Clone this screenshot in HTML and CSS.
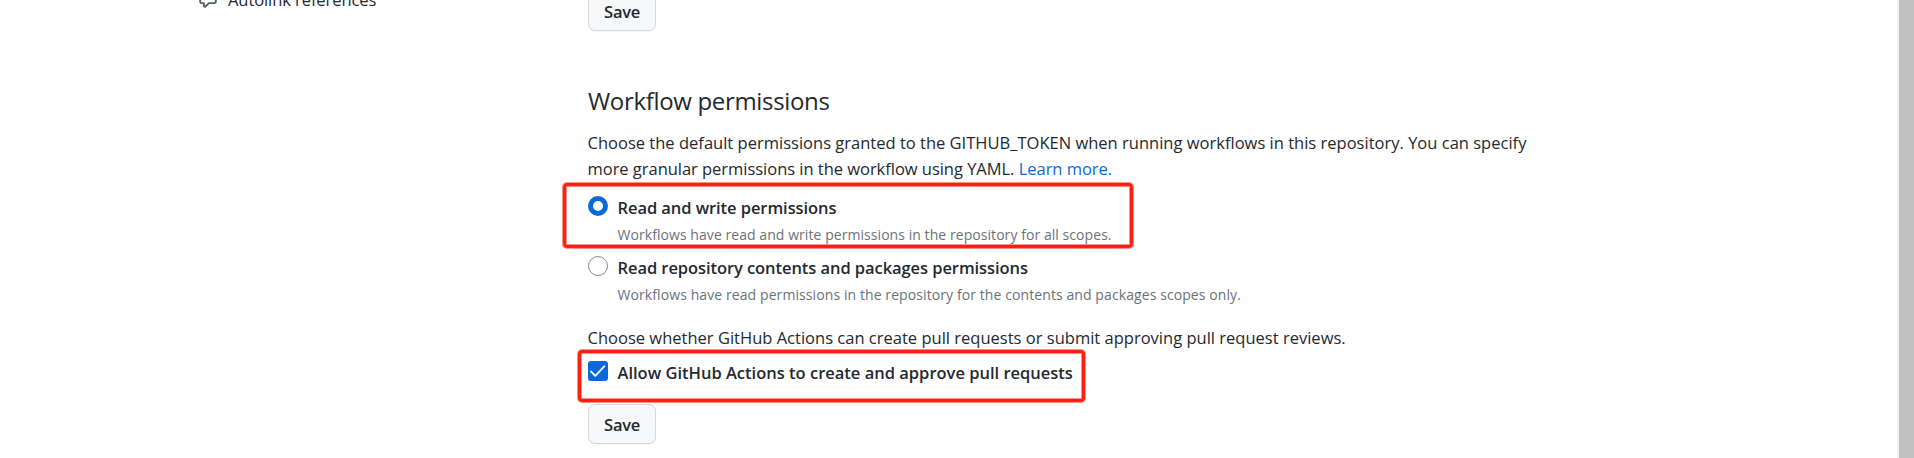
FILE: index.html
```html
<!DOCTYPE html>
<html lang="en">
<head>
<meta charset="utf-8">
<title>Actions settings</title>
<link rel="stylesheet" href="styles.css">
</head>
<body>
<div class="page">
  <nav class="sidebar">
    <a class="nav-item">
      <svg class="nav-icon" viewBox="0 0 16 16"><path fill="currentColor" d="M2.75 2.5a.25.25 0 0 0-.25.25v7.5c0 .138.112.25.25.25h2a.75.75 0 0 1 .75.75v2.19l2.72-2.72a.75.75 0 0 1 .53-.22h4.5a.25.25 0 0 0 .25-.25v-7.5a.25.25 0 0 0-.25-.25H2.75zM1 2.75C1 1.784 1.784 1 2.75 1h10.5c.966 0 1.75.784 1.75 1.75v7.5A1.75 1.75 0 0 1 13.25 12H9.06l-2.573 2.573A1.457 1.457 0 0 1 4 13.543V12H2.75A1.75 1.75 0 0 1 1 10.25v-7.5z"/></svg>
      <span class="nav-label">Autolink references</span>
    </a>
  </nav>
  <main class="content">
    <button class="btn">Save</button>
    <h2 class="heading">Workflow permissions</h2>
    <p class="text intro">Choose the default permissions granted to the GITHUB_TOKEN when running workflows in this repository. You can specify<br><span class="intro-end">more granular permissions in the workflow using YAML. <a class="link">Learn more.</a></span></p>
    <div class="option option-first">
      <span class="radio radio-on"></span>
      <div>
        <div class="label label-tight">Read and write permissions</div>
        <div class="note">Workflows have read and write permissions in the repository for all scopes.</div>
      </div>
      <div class="mark mark-radio"></div>
    </div>
    <div class="option option-second">
      <span class="radio"></span>
      <div>
        <div class="label label-tight">Read repository contents and packages permissions</div>
        <div class="note note-wide">Workflows have read permissions in the repository for the contents and packages scopes only.</div>
      </div>
    </div>
    <p class="text choose">Choose whether GitHub Actions can create pull requests or submit approving pull request reviews.</p>
    <div class="option option-check">
      <svg class="checkbox" viewBox="0 0 20 20"><rect width="20" height="20" rx="3" fill="#0969da"/><path d="M3 10.5 L7.3 14.8 L16.3 5.3" fill="none" stroke="#fff" stroke-width="1.9" stroke-linecap="round" stroke-linejoin="round"/></svg>
      <div class="label">Allow GitHub Actions to create and approve pull requests</div>
      <div class="mark mark-check"></div>
    </div>
    <button class="btn">Save</button>
  </main>
  <div class="scrollbar"></div>
</div>
</body>
</html>
```
FILE: styles.css
```css
* { box-sizing: border-box; }
body { margin: 0; background: #fff; color: #24292f; font: 16.5px/26px "Open Sans", "Noto Sans", sans-serif; overflow: hidden; }
.page { display: flex; height: 458px; overflow: hidden; }
.sidebar { width: 588px; padding-left: 198px; }
.nav-item { display: flex; gap: 10px; margin-top: -13px; height: 26px; }
.nav-icon { width: 20px; height: 20px; margin-top: 2px; color: #57606a; }
.nav-label { white-space: nowrap; letter-spacing: -.08px; }
.content { width: 1309px; }
.btn { display: block; width: 68px; height: 40px; padding: 2px 0 0; border: 1px solid #d5d8db; border-radius: 7px; background: #f6f8fa; box-shadow: 0 1px 0 rgba(27,31,36,.04); color: #24292f; font: 600 16.5px/36px "Open Sans", sans-serif; letter-spacing: -.3px; }
.content > .btn:first-child { margin-top: -9px; }
.heading { margin: 51px 0 0; height: 38px; font-size: 24px; line-height: 38px; font-weight: 400; white-space: nowrap; letter-spacing: -.33px; }
.text { margin: 0; white-space: nowrap; margin-left: -.5px; }
.intro { margin-top: 10px; height: 52px; letter-spacing: .01px; }
.intro-end { letter-spacing: -.03px; }
.link { color: #0969da; }
.option { position: relative; display: flex; gap: 10px; white-space: nowrap; }
.option-first { margin-top: 13px; height: 60px; }
.option-second { height: 60px; }
.radio { width: 20px; height: 20px; margin-top: 1px; border: 1px solid #868b92; border-radius: 50%; flex: none; }
.radio-on { border: 5px solid #0969da; }
.label { height: 27px; font-weight: 600; margin-left: -.5px; }
.label-tight { letter-spacing: -.07px; }
.note { height: 26px; font-size: 14px; color: #6a727b; letter-spacing: .06px; margin-left: -.5px; }
.note-wide { letter-spacing: .09px; }
.choose { margin-top: 10px; height: 26px; letter-spacing: .01px; }
.option-check { margin-top: 9px; height: 44px; }
.checkbox { width: 20px; height: 20px; margin-top: 1px; flex: none; }
.mark { position: absolute; border: 3px solid #ff2012; border-radius: 4px; box-shadow: 0 0 0 1px rgba(255,32,18,.5), inset 0 0 0 1px rgba(255,32,18,.5); }
.mark-radio { left: -25px; top: -12px; width: 570px; height: 65px; }
.mark-check { left: -10px; top: -10px; width: 507px; height: 52px; }
.scrollbar { width: 17px; background: #c1c1c1; border-left: 2px solid #f1f1f1; }
```
